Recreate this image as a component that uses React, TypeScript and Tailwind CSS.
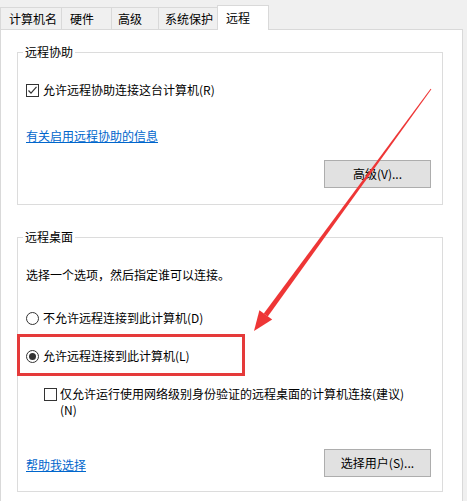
import React from "react";

const font = { fontFamily: '"Noto Sans CJK SC", "Noto Sans", sans-serif' };

function Tab({ label, w, pl, active }: { label: string; w: string; pl: string; active?: boolean }) {
  if (active) {
    return (
      <div className={`${w} ${pl} h-[25px] -mb-[1px] relative z-10 bg-white border-l border-t border-r border-[#d9d9d9] flex items-center text-[12px] leading-[16px] text-black pb-[1px]`}>
        {label}
      </div>
    );
  }
  return (
    <div className={`${w} ${pl} h-[22px] border-l border-t border-[#d9d9d9] flex items-center text-[12px] leading-[16px] text-black`}>
      {label}
    </div>
  );
}

function CheckBox({ checked }: { checked?: boolean }) {
  return (
    <div className="w-[13px] h-[13px] border border-[#333333] bg-white shrink-0 flex items-center justify-center">
      {checked && (
        <svg width="11" height="11" viewBox="0 0 11 11">
          <polyline points="1.5,5.5 4,8.2 9.5,1.8" fill="none" stroke="#333333" strokeWidth="1.2" />
        </svg>
      )}
    </div>
  );
}

function Radio({ checked }: { checked?: boolean }) {
  return (
    <div className="w-[13px] h-[13px] rounded-full border border-[#333333] bg-white shrink-0 flex items-center justify-center">
      {checked && <div className="w-[7px] h-[7px] rounded-full bg-[#333333]" />}
    </div>
  );
}

function Button({ label }: { label: string }) {
  return (
    <div className="w-[107px] h-[28px] bg-[#e1e1e1] border border-[#adadad] flex items-center justify-center text-[12px] leading-[16px] text-black">
      {label}
    </div>
  );
}

export default function App() {
  return (
    <div className="w-[467px] h-[501px] bg-[#f0f0f0] relative overflow-hidden text-black" style={font}>
      {/* Tabs */}
      <div className="flex items-end h-[24px] mt-[5px]">
        <Tab label="计算机名" w="w-[61px]" pl="pl-[8px]" />
        <Tab label="硬件" w="w-[50px]" pl="pl-[8px]" />
        <Tab label="高级" w="w-[47px]" pl="pl-[6px]" />
        <Tab label="系统保护" w="w-[59px]" pl="pl-[6px]" />
        <Tab label="远程" w="w-[52px]" pl="pl-[8px]" active />
      </div>

      {/* Panel */}
      <div className="w-[463px] h-[480px] bg-white border-t border-l border-r border-[#d9d9d9] pl-[16px] pt-[14px]">
        {/* Group 1 */}
        <fieldset className="w-[426px] border border-[#dcdcdc] pl-[8px] pr-[11px] pb-[16px]">
          <legend className="px-[2px] -ml-[3px] text-[12px] leading-[16px]">远程协助</legend>
          <div className="flex items-center h-[16px] mt-[22px]">
            <CheckBox checked />
            <span className="ml-[4px] text-[12px] leading-[16px]">允许远程协助连接这台计算机(R)</span>
          </div>
          <div className="h-[16px] mt-[30px] text-[12px] leading-[16px] text-[#0066cc] underline">
            有关启用远程协助的信息
          </div>
          <div className="flex justify-end mt-[16px]">
            <Button label="高级(V)..." />
          </div>
        </fieldset>

        {/* Group 2 */}
        <fieldset className="w-[426px] mt-[24px] border border-[#dcdcdc] pl-[8px] pr-[11px] pb-[14px]">
          <legend className="px-[2px] -ml-[3px] text-[12px] leading-[16px]">远程桌面</legend>
          <div className="h-[16px] mt-[22px] text-[12px] leading-[16px]">选择一个选项，然后指定谁可以连接。</div>
          <div className="flex items-center h-[16px] mt-[27px]">
            <Radio />
            <span className="ml-[4px] text-[12px] leading-[16px]">不允许远程连接到此计算机(D)</span>
          </div>
          <div className="flex items-center h-[16px] mt-[22px]">
            <Radio checked />
            <span className="ml-[4px] text-[12px] leading-[16px]">允许远程连接到此计算机(L)</span>
          </div>
          <div className="flex items-start mt-[22px] pl-[18px]">
            <div className="pt-[2px]">
              <CheckBox />
            </div>
            <span className="ml-[3px] text-[12px] leading-[16px]">
              仅允许运行使用网络级别身份验证的远程桌面的计算机连接(建议)
              <br />
              (N)
            </span>
          </div>
          <div className="flex items-center justify-between mt-[31px]">
            <span className="text-[12px] leading-[16px] text-[#0066cc] underline mt-[3px]">帮助我选择</span>
            <Button label="选择用户(S)..." />
          </div>
        </fieldset>
      </div>

      {/* Annotation: red box */}
      <div className="absolute left-[17px] top-[334px] w-[228px] h-[42px] border-[3px] border-[#e53a3a] pointer-events-none" />

      {/* Annotation: red arrow */}
      <svg className="absolute left-0 top-0 pointer-events-none" width="467" height="501" viewBox="0 0 467 501">
        <polygon points="431.4,89.3 430.6,88.7 263.8,313.4 267.8,316.4" fill="#ee3636" />
        <polygon points="254,331 259.4,310.2 272.2,319.6" fill="#ee3636" />
      </svg>
    </div>
  );
}
